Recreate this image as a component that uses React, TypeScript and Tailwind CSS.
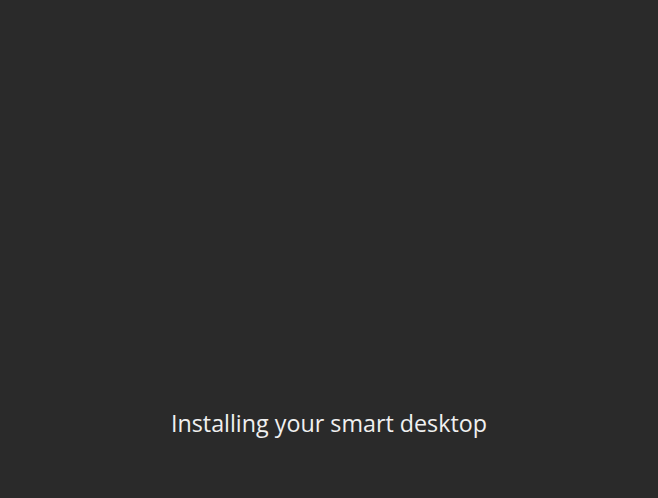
import React from 'react';

export default function App() {
  return (
    <div className="h-[498px] w-full bg-[#2a2a2a] flex flex-col items-center justify-end pb-[59px]">
      <p className="font-['Open_Sans',sans-serif] text-[23.3px] leading-[32px] text-[#f0f0f0]">
        Installing your smart desktop
      </p>
    </div>
  );
}
